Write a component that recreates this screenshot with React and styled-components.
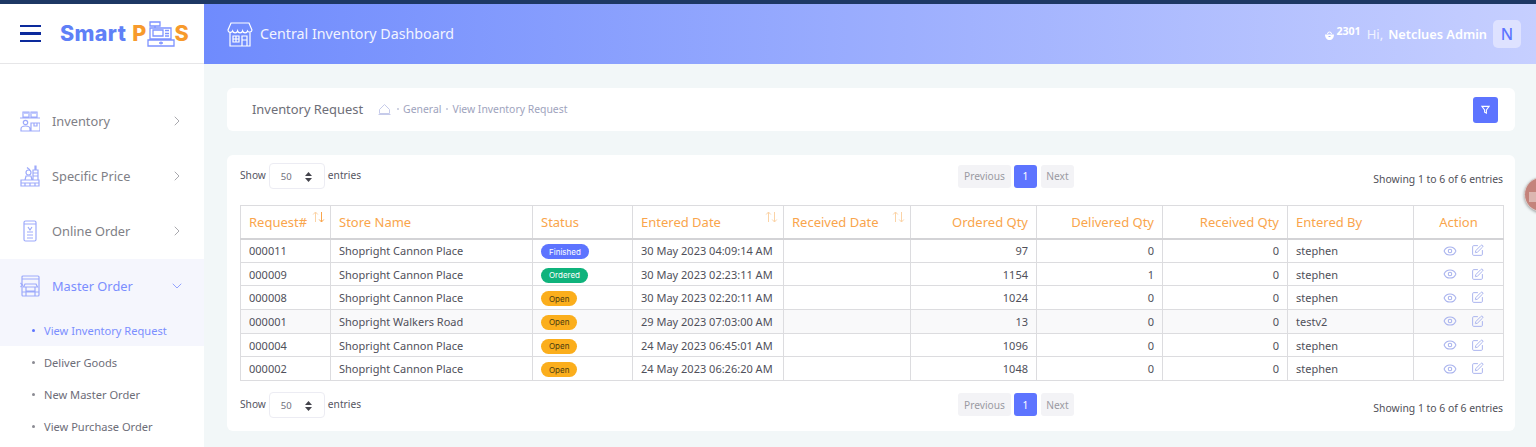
import React from 'react';
import styled, { createGlobalStyle } from 'styled-components';
import { Eye, SquarePen, ChevronRight, ChevronDown } from 'lucide-react';

const Global = createGlobalStyle`
  html, body { margin: 0; padding: 0; height: 447px; overflow: hidden; background: #f2f7f8; }
  * { box-sizing: border-box; }
  body { font-family: "Noto Sans", "Open Sans", sans-serif; }
`;
const Page = styled.div`
  width: 1536px; height: 447px; overflow: hidden; position: relative;
  display: flex; flex-direction: column;
  border-top: 4px solid #1d3864;
`;
const Body = styled.div`display: flex; flex: 1; min-height: 0;`;
const Sidebar = styled.aside`width: 204px; flex: none; background: #fff; display: flex; flex-direction: column;`;
const Brand = styled.div`
  height: 60px; flex: none; display: flex; align-items: center; padding-left: 20px;
  background: #fff; border-bottom: 1px solid #e6e6e8;
`;
const Burger = styled.div`
  width: 21px; height: 18px; display: flex; flex-direction: column; justify-content: space-between; margin-right: 19px;
  span { display: block; height: 2.4px; background: #0c2a9c; }
`;
const Logo = styled.div`
  display: flex; align-items: center; font-family: "Inter", sans-serif; font-weight: 800; font-size: 21.5px;
  letter-spacing: 0.35px; color: #5f80f7; line-height: 1;
`;
const LogoOrange = styled.span`color: #f79a2c; margin-left: ${p => p.$gap || 0}px;`;
const Nav = styled.nav`padding-top: 30px; display: flex; flex-direction: column;`;
const NavItem = styled.div`
  height: 55px; display: flex; align-items: center; padding: 0 19px 2px 20px;
  background: ${p => (p.$active ? '#f5f6fd' : 'transparent')};
  color: ${p => (p.$active ? '#7b8eff' : '#808086')};
  font-size: 12.8px;
`;
const NavIcon = styled.svg`width: 20px; height: 22px; margin-right: 12px; flex: none; fill: none; stroke: #9daafb; stroke-width: 1.2;`;
const NavLabel = styled.span`flex: 1;`;
const SubList = styled.div`display: flex; flex-direction: column;`;
const SubItem = styled.div`
  height: 32px; display: flex; align-items: center; padding-left: 32px; font-size: 11.1px;
  background: ${p => (p.$active ? '#f5f6fd' : 'transparent')};
  color: ${p => (p.$active ? '#7b8eff' : '#6d6d78')};
  &::before { content: ''; width: 3px; height: 3px; border-radius: 50%; margin-right: 9px;
    background: ${p => (p.$active ? '#5d74ff' : '#8b8b93')}; }
`;
const Main = styled.div`flex: 1; min-width: 0; display: flex; flex-direction: column;`;
const Header = styled.header`
  height: 60px; flex: none; display: flex; align-items: center; padding: 0 15px 0 23px;
  background: linear-gradient(90deg, #6f8bfd 0%, #c6cfff 100%); color: #fff;
`;
const HeaderTitle = styled.div`flex: 1; margin-left: 7px; font-size: 14.25px; color: #f2f4ff; margin-bottom: 2px;`;
const Badge = styled.div`display: flex; align-items: flex-start; font-size: 10.6px; font-weight: 700; margin-right: 6px; color: #fff; margin-top: -5px;`;
const Hi = styled.span`font-size: 13px; color: #f0f2ff; margin-right: 5px;`;
const UserName = styled.span`font-size: 12.8px; font-weight: 600; color: #fff; margin-right: 6px;`;
const Avatar = styled.div`
  width: 28px; height: 28px; border-radius: 5px; background: #dee2ff; color: #5d74ff;
  display: flex; align-items: center; justify-content: center; font-size: 16px; font-weight: 500;
`;
const Content = styled.main`padding: 24px 21px 0 23px; display: flex; flex-direction: column; gap: 24px;`;
const Breadbar = styled.div`
  height: 43px; background: #fff; border-radius: 6px; display: flex; align-items: center; padding: 0 17px 0 25px;
`;
const PageTitle = styled.div`font-size: 12.9px; color: #6e6e78; margin-right: 15px; margin-bottom: 1px;`;
const Crumbs = styled.div`flex: 1; display: flex; align-items: center; font-size: 10.4px; color: #9ea3bd; margin-bottom: 1px;`;
const HomeIcon = styled.svg`width: 13px; height: 12px; margin-right: 1px; fill: none; stroke: #c6cbea; stroke-width: 1;`;
const Dot = styled.span`width: 2px; height: 2px; margin: 0 4.5px; background: #c0c4d8; border-radius: 50%;`;
const FilterBtn = styled.button`
  width: 25px; height: 26px; border: 0; border-radius: 3px; background: #5d74ff; padding: 0;
  display: flex; align-items: center; justify-content: center;
`;
const Card = styled.section`background: #fff; border-radius: 6px; padding: 8px 12px 0 13px; height: 276px;`;
const Controls = styled.div`
  height: 42px; display: grid; grid-template-columns: 718px auto 1fr; align-items: start;
  font-size: 10.2px; color: #55555f;
`;
const BottomControls = styled(Controls)`margin-top: 11px; height: 40px;`;
const LengthBox = styled.div`display: flex; align-items: center; gap: 3px;`;
const LengthLabel = styled.span`margin-bottom: 2px;`;
const SelectBox = styled.div`
  width: 56px; height: 26px; border: 1px solid #ececf3; border-radius: 4px;
  display: flex; align-items: center; justify-content: space-between; padding: 2px 12px 0 11px; font-size: 9.5px; color: #72727e; line-height: 1;
`;
const Pager = styled.div`display: flex; gap: 3px; margin-top: ${p => p.$mt}px; font-size: 10.2px; line-height: 1;`;
const PageBtn = styled.div`
  height: 23px; width: ${p => p.$w}px; border-radius: 3px; display: flex; align-items: center; justify-content: center;
  background: ${p => (p.$active ? '#5d74ff' : '#f3f3f6')}; color: ${p => (p.$active ? '#fff' : '#9a9aa2')};
  &:last-child { margin-left: 1px; }
`;
const Info = styled.div`text-align: right; margin-top: ${p => p.$mt}px; font-size: 10.4px; color: #4f4f58; line-height: 14px;`;
const Table = styled.table`
  border-collapse: collapse; table-layout: fixed; width: 1263px; font-size: 11px; color: #50505a;
  border: 1px solid #dadadd;
`;
const Th = styled.th`
  height: 33px; padding: 0 8px; border: 1px solid #dcdcdf; border-bottom: 2px solid #d3d3d6; font-weight: 400; font-size: 13px; color: #f9a54c;
  text-align: ${p => p.$align || 'left'}; position: relative; white-space: nowrap;
`;
const Sort = styled.svg`position: absolute; right: 5px; top: 4px; width: 13px; height: 14px; fill: none; stroke-width: 1;`;
const Td = styled.td`
  height: 23.7px; padding: 0 8px; border: 1px solid #dcdcdf; text-align: ${p => p.$align || 'left'}; white-space: nowrap; line-height: 1;
`;
const Tr = styled.tr`background: ${p => (p.$shade ? '#f9f9fa' : '#fff')};`;
const Pill = styled.span`
  display: inline-flex; align-items: center; justify-content: center; height: 15px; padding: 0 8px; border-radius: 8px; margin-top: 2px;
  background: ${p => p.$bg}; color: ${p => p.$fg}; font-size: 8px; line-height: 1; vertical-align: middle; font-family: "Inter", sans-serif;
`;
const Actions = styled.div`display: flex; justify-content: center; align-items: center; gap: 14px; padding-left: 10px;`;
const Floating = styled.div`
  position: absolute; left: 1524px; top: 173px; width: 35px; height: 35px; border-radius: 50%;
  background: #c4837b; border: 1px solid #d8cfcd; box-shadow: 0 1px 3px rgba(0,0,0,.35); display: flex; align-items: center; padding: 4px 0 0 4px;
  &::after { content: ''; width: 10px; height: 10px; background: #dcb6b0; }
`;

const rows = [
  ['000011', 'Shopright Cannon Place', 'Finished', '30 May 2023 04:09:14 AM', 97, 0, 0, 'stephen'],
  ['000009', 'Shopright Cannon Place', 'Ordered', '30 May 2023 02:23:11 AM', 1154, 1, 0, 'stephen'],
  ['000008', 'Shopright Cannon Place', 'Open', '30 May 2023 02:20:11 AM', 1024, 0, 0, 'stephen'],
  ['000001', 'Shopright Walkers Road', 'Open', '29 May 2023 07:03:00 AM', 13, 0, 0, 'testv2'],
  ['000004', 'Shopright Cannon Place', 'Open', '24 May 2023 06:45:01 AM', 1096, 0, 0, 'stephen'],
  ['000002', 'Shopright Cannon Place', 'Open', '24 May 2023 06:26:20 AM', 1048, 0, 0, 'stephen'],
];
const pills = {
  Finished: { bg: '#5d74ff', fg: '#fff' },
  Ordered: { bg: '#0fb37c', fg: '#fff' },
  Open: { bg: '#fbae1c', fg: '#4a3a10' },
};
const widths = [90, 202, 100, 151, 127, 126, 126, 125, 126, 90];

const SortIcon = ({ down }) => (
  <Sort viewBox="0 0 13 14">
    <path d="M3.5 12V2M1.2 4.5 3.5 2l2.3 2.5" stroke="#fbd3a6" />
    <path d="M9.5 2v10M7.2 9.5 9.5 12l2.3-2.5" stroke={down ? '#f9a54c' : '#fbd3a6'} />
  </Sort>
);

const Icons = {
  inv: <><path d="M3 2h6v5H3zM11 2h6v5h-6zM0 8h20M5 2v2M7 2v2M13 2v2M15 2v2" /><circle cx="5.5" cy="12.5" r="2.2" /><path d="M1 21v-2c0-2 2-3 4.5-3s4.5 1 4.5 3v2zM11 13h9v8h-9zM14 13v3h3v-3" /></>,
  price: <><path d="M1 21v-6h18v6zM1 18h18M5 15l1-4h5l1 4M13 15V5h5v10M15 5V1h1v4M13 8h5M13 11h5M5 21v-3M10 21v-3M15 21v-3" /><circle cx="8.5" cy="7.5" r="2.5" /><path d="M7 2.5l3 2.5" /></>,
  online: <><rect x="4" y="1" width="12" height="20" rx="1.5" /><path d="M4 4h12M8 7l2 3 2-3M7 12h6M7 15h6M7 18h6" /></>,
  master: <><rect x="2" y="1" width="17" height="20" rx="1" /><path d="M2 4h17M5 9h11l1.5 3H3.5zM6 12v4h9v-4M0.5 8l2 2-2 2M6 21v-5M15 21v-5M2 17h17" /></>,
};

const LengthRow = () => (
  <LengthBox>
    <LengthLabel>Show</LengthLabel>
    <SelectBox>
      <span>50</span>
      <svg width="7" height="10" viewBox="0 0 7 10"><path d="M3.5 0 7 4H0zM3.5 10 0 6h7z" fill="#44444c" /></svg>
    </SelectBox>
    <LengthLabel>entries</LengthLabel>
  </LengthBox>
);
const PagerRow = ({ mt }) => (
  <Pager $mt={mt}>
    <PageBtn $w={53}>Previous</PageBtn>
    <PageBtn $active $w={23}>1</PageBtn>
    <PageBtn $w={33}>Next</PageBtn>
  </Pager>
);

export default function App() {
  return (
    <Page>
      <Global />
      <Body>
        <Sidebar>
          <Brand>
            <Burger><span /><span /><span /></Burger>
            <Logo>
              Smart<LogoOrange $gap={6}>P</LogoOrange>
              <svg width="28" height="26" viewBox="0 0 28 26" fill="none" stroke="#7d93ff" strokeWidth="1.3">
                <path d="M3 1h10v4H3zM8 5v2M3 7h21v11H3zM6 9h10v6H6zM18 9.5h4M18 12.5h4M18 15h4M1 19h26v6H1zM12 22h4M14 20.5v3" />
              </svg>
              <LogoOrange>S</LogoOrange>
            </Logo>
          </Brand>
          <Nav>
            {[['Inventory', 'inv'], ['Specific Price', 'price'], ['Online Order', 'online']].map(([t, k]) => (
              <NavItem key={k}>
                <NavIcon viewBox="0 0 20 22">{Icons[k]}</NavIcon>
                <NavLabel>{t}</NavLabel>
                <ChevronRight size={16} color="#a2a2a8" strokeWidth={1.4} />
              </NavItem>
            ))}
            <NavItem $active>
              <NavIcon viewBox="0 0 20 22">{Icons.master}</NavIcon>
              <NavLabel>Master Order</NavLabel>
              <ChevronDown size={16} color="#8c9cff" strokeWidth={1.4} />
            </NavItem>
            <SubList>
              <SubItem $active>View Inventory Request</SubItem>
              <SubItem>Deliver Goods</SubItem>
              <SubItem>New Master Order</SubItem>
              <SubItem>View Purchase Order</SubItem>
            </SubList>
          </Nav>
        </Sidebar>
        <Main>
          <Header>
            <svg width="26" height="25" viewBox="0 0 26 25" fill="none" stroke="#fff" strokeWidth="1.2">
              <path d="M4 1h18l3 7a2.4 2.4 0 0 1-4.4 1 2.6 2.6 0 0 1-5 0 2.6 2.6 0 0 1-5 0 2.6 2.6 0 0 1-5 0A2.4 2.4 0 0 1 1 8zM3 11v13h20V11M6 14h6v6H6zM15 14h5v10h-5zM6 14h6v6H6M9 14v6M6 17h6M15 18h5" />
            </svg>
            <HeaderTitle>Central Inventory Dashboard</HeaderTitle>
            <Badge>
              <svg width="9" height="9" viewBox="0 0 9 9" style={{ marginTop: 7, marginRight: 2 }}>
                <path d="M2.5 3a2 2 0 0 1 4 0" fill="none" stroke="#fff" strokeWidth="1" />
                <path d="M0 3.5h9C9 7 7 9 4.5 9S0 7 0 3.5z" fill="#fff" />
                <path d="M3.5 5.5h2" stroke="#a3b3fe" strokeWidth="1" />
              </svg>
              2301
            </Badge>
            <Hi>Hi,</Hi>
            <UserName>Netclues Admin</UserName>
            <Avatar>N</Avatar>
          </Header>
          <Content>
            <Breadbar>
              <PageTitle>Inventory Request</PageTitle>
              <Crumbs>
                <HomeIcon viewBox="0 0 13 12">
                  <path d="M1.5 6.5 6.5 1.5l5 5V10.5h-10zM0.5 11.5h12" />
                </HomeIcon>
                <Dot />General<Dot />View Inventory Request
              </Crumbs>
              <FilterBtn aria-label="Filter">
                <svg width="9" height="9" viewBox="0 0 10 10" fill="none" stroke="#fff" strokeWidth="1.2"><path d="M1 1.5h8L6 5.5V9L4 8V5.5z" /></svg>
              </FilterBtn>
            </Breadbar>
            <Card>
              <Controls>
                <LengthRow />
                <PagerRow mt={2} />
                <Info $mt={9}>Showing 1 to 6 of 6 entries</Info>
              </Controls>
              <Table>
                <colgroup>{widths.map((w, i) => <col key={i} style={{ width: w }} />)}</colgroup>
                <thead>
                  <tr>
                    <Th>Request#<SortIcon down /></Th>
                    <Th>Store Name</Th>
                    <Th>Status</Th>
                    <Th>Entered Date<SortIcon /></Th>
                    <Th>Received Date<SortIcon /></Th>
                    <Th $align="right">Ordered Qty</Th>
                    <Th $align="right">Delivered Qty</Th>
                    <Th $align="right">Received Qty</Th>
                    <Th>Entered By</Th>
                    <Th $align="center">Action</Th>
                  </tr>
                </thead>
                <tbody>
                  {rows.map((r, i) => (
                    <Tr key={r[0]} $shade={i === 3}>
                      <Td>{r[0]}</Td>
                      <Td>{r[1]}</Td>
                      <Td><Pill $bg={pills[r[2]].bg} $fg={pills[r[2]].fg}>{r[2]}</Pill></Td>
                      <Td>{r[3]}</Td>
                      <Td />
                      <Td $align="right">{r[4]}</Td>
                      <Td $align="right">{r[5]}</Td>
                      <Td $align="right">{r[6]}</Td>
                      <Td>{r[7]}</Td>
                      <Td>
                        <Actions>
                          <Eye size={14} color="#a9b3ee" strokeWidth={1.8} />
                          <SquarePen size={13} color="#a9b3ee" strokeWidth={1.8} />
                        </Actions>
                      </Td>
                    </Tr>
                  ))}
                </tbody>
              </Table>
              <BottomControls>
                <LengthRow />
                <PagerRow mt={1} />
                <Info $mt={9}>Showing 1 to 6 of 6 entries</Info>
              </BottomControls>
            </Card>
          </Content>
        </Main>
      </Body>
      <Floating />
    </Page>
  );
}
